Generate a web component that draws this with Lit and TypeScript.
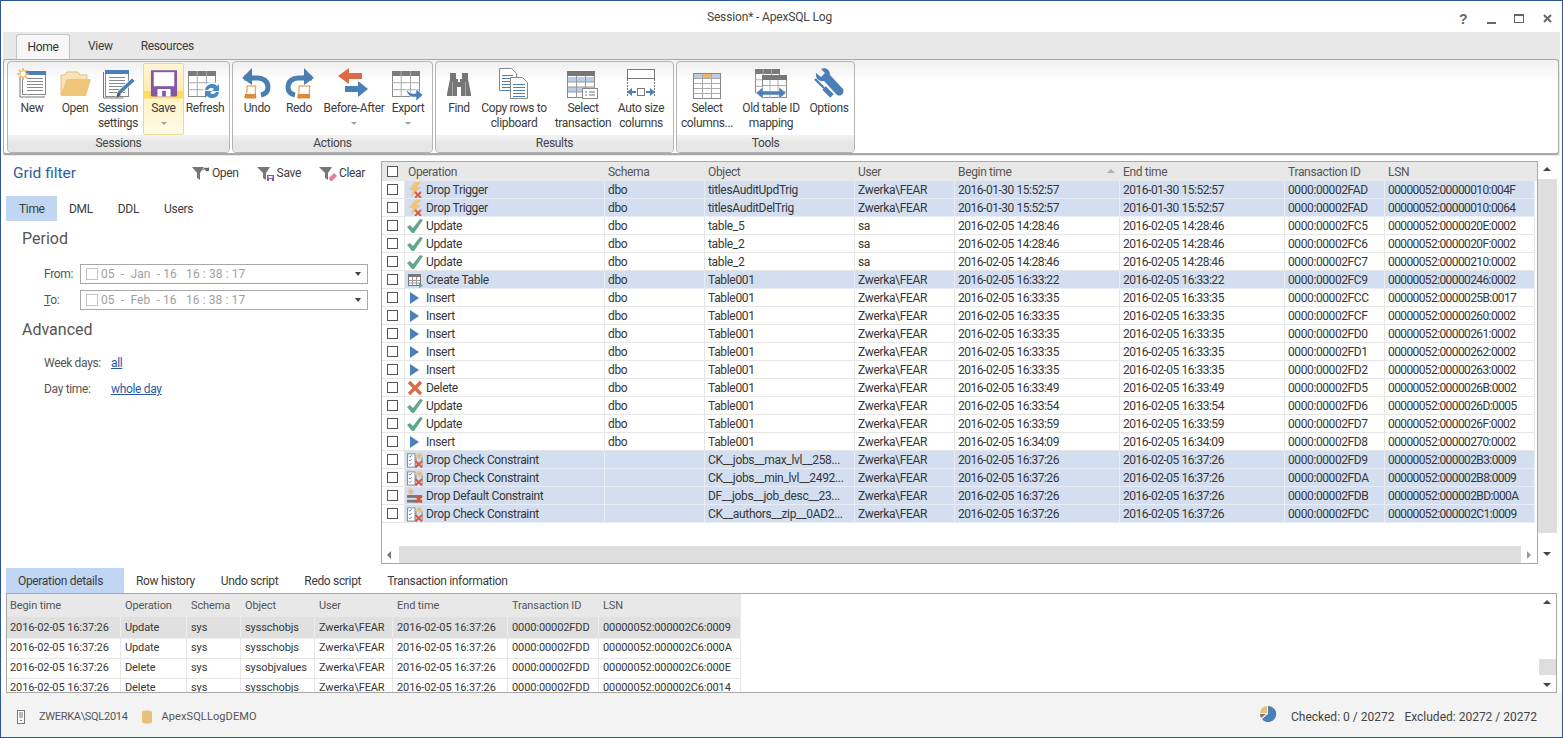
import { LitElement, html, css, svg } from "lit";
import { customElement } from "lit/decorators.js";

const lines = (x: number, y: number, w: number, n: number, step = 3, c = "#8a8a8a") =>
  Array.from({ length: n }, (_, i) => svg`<path d="M${x} ${y + i * step + 0.5}h${w}" stroke="${c}"/>`);

const table = (x: number, y: number, w: number, h: number, head = "#7a7a7a") => svg`
  <rect x="${x + .5}" y="${y + .5}" width="${w - 1}" height="${h - 1}" fill="#fff" stroke="#8a8a8a"/>
  <rect x="${x}" y="${y}" width="${w}" height="5" fill="${head}"/>
  <path d="M${x} ${y + h * .45}h${w}M${x} ${y + h * .72}h${w}M${x + w * .33} ${y}v${h}M${x + w * .66} ${y}v${h}" stroke="#aaa" fill="none"/>`;

const icons: Record<string, any> = {
  new: svg`<svg viewBox="0 -2 32 32" width="32" height="32"><path d="M4 9v20h25" fill="none" stroke="#777"/><rect x="6.5" y="3.5" width="23" height="23" fill="#fff" stroke="#888"/><rect x="6" y="3" width="24" height="4" fill="#4a7fb8"/>${lines(11, 10, 16, 5, 3)}<g stroke="#eab35c" stroke-width="1.6"><path d="M7 0v12M1 6h12M3 2l8 8M11 2l-8 8"/></g><circle cx="7" cy="6" r="3.2" fill="#fff" stroke="#eab35c"/></svg>`,
  open: svg`<svg viewBox="0 -1 32 32" width="32" height="32"><path d="M2 28V8h4l2-3h11l2 3h7v5H8z" fill="#f8e3b8" stroke="#e5c078"/><path d="M8 12h24l-5 17H2z" fill="#eec67a"/></svg>`,
  settings: svg`<svg viewBox="0 -2 32 32" width="32" height="32"><path d="M1.5 4v26h20" fill="none" stroke="#777"/><rect x="3.5" y="2.5" width="23" height="26" fill="#fff" stroke="#888"/><rect x="3" y="2" width="24" height="4" fill="#4a7fb8"/>${lines(7, 9, 16, 6, 3)}<path d="M14 29l2-6 14-13 3 3-14 13z" fill="#4a7fb8" stroke="#fff" stroke-width=".8"/><path d="M14 30l2-6 3 3z" fill="#555"/></svg>`,
  save: svg`<svg viewBox="0 -1.5 30 30" width="28" height="28"><path d="M1 1h28v27l-1 1H2l-1-1z" fill="#8557a8"/><rect x="4" y="3" width="22" height="15" fill="#fff"/><rect x="8" y="21" width="14" height="8" fill="#fff"/><rect x="13" y="23" width="4" height="6" fill="#8557a8"/></svg>`,
  refresh: svg`<svg viewBox="0 -3 34 32" width="34" height="32">${table(0, 2, 28, 26)}<circle cx="24" cy="22" r="9" fill="#fff"/><path d="M17 21a7 7 0 0 1 12-4l2-2v7h-7l2-2a4 4 0 0 0-6 1zM31 23a7 7 0 0 1-12 4l-2 2v-7h7l-2 2a4 4 0 0 0 6-1z" fill="#4a8ac4"/></svg>`,
  undo: svg`<svg viewBox="0 -2 32 32" width="32" height="32"><path d="M3 10h13a10 9 0 0 1 11 9c0 4-2 7-7 8" fill="none" stroke="#4a7fb0" stroke-width="5"/><path d="M11 0L1 10l10 7V12l2-2-2-3z" fill="#4a7fb0"/><path d="M6 18h9c-1 3-1 8 0 12H4c-1-3 2-4 2-6z" fill="#fff" stroke="#e08a3c"/><path d="M4 26h11v4H4z" fill="#e08a3c"/></svg>`,
  redo: svg`<svg viewBox="0 -2 32 32" width="32" height="32"><path d="M29 10H16a10 9 0 0 0-11 9c0 4 2 7 7 8" fill="none" stroke="#4a7fb0" stroke-width="5"/><path d="M21 0l10 10-10 7V12l-2-2 2-3z" fill="#4a7fb0"/><path d="M16 18h11c-1 3-1 8 0 12H15c-1-3 1-4 1-6z" fill="#fff" stroke="#e08a3c"/><path d="M15 26h12v4H15z" fill="#e08a3c"/></svg>`,
  before: svg`<svg viewBox="0 0 32 32" width="32" height="32"><path d="M11 2L0 10l11 8v-5h13V7H11z" fill="#dc6a45"/><path d="M20 15l10 8-10 8v-5H7v-6h13z" fill="#4a7fb8"/></svg>`,
  export: svg`<svg viewBox="0 -3 32 32" width="32" height="32">${table(0, 2, 28, 26)}<path d="M14 20c4 5 7 5 10 4v-4l7 6-7 6v-4c-5 1-9-2-10-8z" fill="#4a7fb8" stroke="#fff" stroke-width=".6"/></svg>`,
  find: svg`<svg viewBox="0 -4 26 26" width="26" height="26"><path d="M4 0h6v6h2v3h2V6h2V0h6v6l3 15v2H15v-9h-4v9H1v-2L1 21l3-15z" fill="#767676"/><path d="M6.500 9v14M19.500 9v14" stroke="#aaa"/></svg>`,
  copy: svg`<svg viewBox="0 -2 30 32" width="30" height="32"><path d="M.5 .5h12l5 5v17H.5z" fill="#fff" stroke="#888"/>${lines(3, 7, 11, 6, 3, "#4a7fb8")}<path d="M11.500 9.500h12l5 5v16h-17z" fill="#fff" stroke="#888"/>${lines(14, 16, 12, 5, 3, "#4a7fb8")}</svg>`,
  select: svg`<svg viewBox="0 -4 32 30" width="32" height="30"><rect x=".5" y=".5" width="27" height="26" fill="#fff" stroke="#888"/><rect width="28" height="5" fill="#777"/><rect x="1" y="6" width="26" height="5" fill="#b9cde6"/><rect x="1" y="16" width="26" height="5" fill="#b9cde6"/><path d="M9.500 5v22M18.500 5v22M0 11h28M0 16h28M0 21h28" stroke="#999"/><rect x="15.500" y="17.500" width="15" height="10" fill="#fff" stroke="#888"/><path d="M18 21h2M18 24h2M22 21h6M22 24h6" stroke="#777"/></svg>`,
  auto: svg`<svg viewBox="0 -2 30 30" width="30" height="30"><rect x="1.500" y=".5" width="27" height="9" fill="#fff" stroke="#777"/><path d="M1.500 10v18M28.500 10v18" stroke="#777" stroke-dasharray="2 1"/><rect x="11.500" y="19.500" width="7" height="7" fill="#fff" stroke="#777"/><path d="M1 23l5-4v3h4v2H6v3zM29 23l-5-4v3h-4v2h4v3z" fill="#4a7fb8"/></svg>`,
  columns: svg`<svg viewBox="0 -4 28 26" width="28" height="26"><rect x=".5" y=".5" width="27" height="25" fill="#fff" stroke="#888"/><rect x="1" y="1" width="8" height="4" fill="#b9cde6"/><rect x="10" y="1" width="8" height="4" fill="#e8b96c"/><rect x="19" y="1" width="8" height="4" fill="#b9cde6"/><path d="M9.500 1v24M18.500 1v24M1 5.500h26M1 10.500h26M1 15.500h26M1 20.500h26" stroke="#aaa"/></svg>`,
  oldid: svg`<svg viewBox="0 -2 32 32" width="32" height="32">${table(0, 1, 25, 24)}<rect x="7.500" y="7.500" width="24" height="22" fill="#fff" stroke="#888"/><rect x="7" y="7" width="25" height="5" fill="#777"/><path d="M15 12v18M23 12v18M8 17.500h24M8 23.500h24" stroke="#aaa"/><path d="M1 25l7-6v4h16v-4l7 6-7 6v-4H8v4z" fill="#4a7fb8" stroke="#fff" stroke-width=".5"/></svg>`,
  options: svg`<svg viewBox="0 -2 32 32" width="32" height="32"><path d="M8 1c4-2 9 0 9 6l13 14c2 4-2 8-6 6L11 13C6 14 2 10 3 5l5 4 4-4z" fill="#4a7fb8"/><path d="M2 11l9 9" stroke="#4a7fb8" stroke-width="2.400"/><path d="M11 20l8 8" stroke="#4a7fb8" stroke-width="5"/></svg>`,
  fOpen: svg`<svg viewBox="0 0 18 15" width="18" height="15"><path d="M0 1h12L8 7v7l-3-2V7z" fill="#777"/><path d="M10 5c1-3 3-4 6-3l1-1v4h-4l1-1c-2-1-3 0-4 1z" fill="#666"/></svg>`,
  fSave: svg`<svg viewBox="0 0 18 15" width="18" height="15"><path d="M0 1h13L9 7v7l-3-2V7z" fill="#777"/><rect x="10" y="9" width="7" height="6" fill="#8557a8"/><rect x="11.500" y="10" width="4" height="2" fill="#fff"/><rect x="12" y="13" width="3" height="2" fill="#fff"/></svg>`,
  fClear: svg`<svg viewBox="0 0 18 15" width="18" height="15"><path d="M0 1h13L9 7v7l-3-2V7z" fill="#777"/><path d="M10 12l5-5 3 3-5 5h-2z" fill="#ec7b95"/></svg>`,
};

const opIcons: Record<string, any> = {
  trig: svg`<svg viewBox="0 0 16 16" width="16" height="16"><path d="M8 0h6l-4 5h4L4 15l2-7H2z" fill="#f2c27a"/><path d="M8 10l6 6M14 10l-6 6" stroke="#d9573a" stroke-width="1.800"/></svg>`,
  upd: svg`<svg viewBox="0 0 16 16" width="16" height="16"><path d="M0 9l3-2 3 3 7-9 3 1-9 13H5z" fill="#63a68d"/></svg>`,
  tbl: svg`<svg viewBox="0 0 16 16" width="16" height="16"><rect x="1.500" y="2.500" width="12" height="11" fill="#fff" stroke="#777"/><rect x="1" y="2" width="13" height="3" fill="#777"/><path d="M5.500 5v8M9.500 5v8M2 8.500h11M2 11h11" stroke="#999"/><path d="M12 11l4 2.500-4 2.500z" fill="#63a68d"/></svg>`,
  ins: svg`<svg viewBox="0 0 16 16" width="16" height="16"><path d="M3 2l9 6-9 6z" fill="#4a7fb8"/></svg>`,
  del: svg`<svg viewBox="0 0 16 16" width="16" height="16"><path d="M2 2l12 12M14 2L2 14" stroke="#dc6a45" stroke-width="3.400"/></svg>`,
  chk: svg`<svg viewBox="0 0 17 16" width="16" height="16"><rect x=".5" y="1.500" width="8" height="14" fill="#fff" stroke="#888"/><path d="M2 4l1 1 2-2M2 8l1 1 2-2M2 12l1 1 2-2" stroke="#4a7fb8" fill="none"/><path d="M9.500 5v10M16 5v10" stroke="#888"/><path d="M13 0v7M9.500 3.500h7M10.500 1l5 5M15.500 1l-5 5" stroke="#eab35c"/><path d="M9 9l7 7M16 9l-7 7" stroke="#d9573a" stroke-width="2"/></svg>`,
  dflt: svg`<svg viewBox="0 0 17 16" width="16" height="16"><path d="M4 0v7M.5 3.500h7M1.500 1l5 5M6.500 1l-5 5" stroke="#eab35c"/><rect x="0" y="7" width="16" height="3" fill="#777"/><rect x="0" y="12" width="16" height="3" fill="#777"/><path d="M9 8l7 7M16 8l-7 7" stroke="#d9573a" stroke-width="2"/></svg>`,
};

type Row = [string, string, string, string, string, string, string, string, string, boolean];
const S = "2016-02-05 ";
const rows: Row[] = [
  ["trig", "Drop Trigger", "dbo", "titlesAuditUpdTrig", "Zwerka\\FEAR", "2016-01-30 15:52:57", "2016-01-30 15:52:57", "0000:00002FAD", "00000052:00000010:004F", true],
  ["trig", "Drop Trigger", "dbo", "titlesAuditDelTrig", "Zwerka\\FEAR", "2016-01-30 15:52:57", "2016-01-30 15:52:57", "0000:00002FAD", "00000052:00000010:0064", true],
  ["upd", "Update", "dbo", "table_5", "sa", S + "14:28:46", S + "14:28:46", "0000:00002FC5", "00000052:0000020E:0002", false],
  ["upd", "Update", "dbo", "table_2", "sa", S + "14:28:46", S + "14:28:46", "0000:00002FC6", "00000052:0000020F:0002", false],
  ["upd", "Update", "dbo", "table_2", "sa", S + "14:28:46", S + "14:28:46", "0000:00002FC7", "00000052:00000210:0002", false],
  ["tbl", "Create Table", "dbo", "Table001", "Zwerka\\FEAR", S + "16:33:22", S + "16:33:22", "0000:00002FC9", "00000052:00000246:0002", true],
  ["ins", "Insert", "dbo", "Table001", "Zwerka\\FEAR", S + "16:33:35", S + "16:33:35", "0000:00002FCC", "00000052:0000025B:0017", false],
  ["ins", "Insert", "dbo", "Table001", "Zwerka\\FEAR", S + "16:33:35", S + "16:33:35", "0000:00002FCF", "00000052:00000260:0002", false],
  ["ins", "Insert", "dbo", "Table001", "Zwerka\\FEAR", S + "16:33:35", S + "16:33:35", "0000:00002FD0", "00000052:00000261:0002", false],
  ["ins", "Insert", "dbo", "Table001", "Zwerka\\FEAR", S + "16:33:35", S + "16:33:35", "0000:00002FD1", "00000052:00000262:0002", false],
  ["ins", "Insert", "dbo", "Table001", "Zwerka\\FEAR", S + "16:33:35", S + "16:33:35", "0000:00002FD2", "00000052:00000263:0002", false],
  ["del", "Delete", "dbo", "Table001", "Zwerka\\FEAR", S + "16:33:49", S + "16:33:49", "0000:00002FD5", "00000052:0000026B:0002", false],
  ["upd", "Update", "dbo", "Table001", "Zwerka\\FEAR", S + "16:33:54", S + "16:33:54", "0000:00002FD6", "00000052:0000026D:0005", false],
  ["upd", "Update", "dbo", "Table001", "Zwerka\\FEAR", S + "16:33:59", S + "16:33:59", "0000:00002FD7", "00000052:0000026F:0002", false],
  ["ins", "Insert", "dbo", "Table001", "Zwerka\\FEAR", S + "16:34:09", S + "16:34:09", "0000:00002FD8", "00000052:00000270:0002", false],
  ["chk", "Drop Check Constraint", "", "CK__jobs__max_lvl__258...", "Zwerka\\FEAR", S + "16:37:26", S + "16:37:26", "0000:00002FD9", "00000052:000002B3:0009", true],
  ["chk", "Drop Check Constraint", "", "CK__jobs__min_lvl__2492...", "Zwerka\\FEAR", S + "16:37:26", S + "16:37:26", "0000:00002FDA", "00000052:000002B8:0009", true],
  ["dflt", "Drop Default Constraint", "", "DF__jobs__job_desc__23...", "Zwerka\\FEAR", S + "16:37:26", S + "16:37:26", "0000:00002FDB", "00000052:000002BD:000A", true],
  ["chk", "Drop Check Constraint", "", "CK__authors__zip__0AD2...", "Zwerka\\FEAR", S + "16:37:26", S + "16:37:26", "0000:00002FDC", "00000052:000002C1:0009", true],
];

const details = [
  ["Update", "sys", "sysschobjs", "00000052:000002C6:0009"],
  ["Update", "sys", "sysschobjs", "00000052:000002C6:000A"],
  ["Delete", "sys", "sysobjvalues", "00000052:000002C6:000E"],
  ["Delete", "sys", "sysschobjs", "00000052:000002C6:0014"],
];

const groups = [
  { label: "Sessions", w: 223, pad: 4, items: [
    ["new", ["New"], 40, false], ["open", ["Open"], 46, false], ["settings", ["Session", "settings"], 40, false], ["save", ["Save"], 41, true, 5], ["refresh", ["Refresh"], 42, false]] },
  { label: "Actions", w: 201, pad: 3, items: [
    ["undo", ["Undo"], 42, false], ["redo", ["Redo"], 42, false], ["before", ["Before-After"], 68, true], ["export", ["Export"], 40, true]] },
  { label: "Results", w: 239, pad: 5, items: [
    ["find", ["Find"], 36, false], ["copy", ["Copy rows to", "clipboard"], 74, false], ["select", ["Select", "transaction"], 64, false], ["auto", ["Auto size", "columns"], 52, false]] },
  { label: "Tools", w: 179, pad: 4, items: [
    ["columns", ["Select", "columns..."], 52, false], ["oldid", ["Old table ID", "mapping"], 76, false], ["options", ["Options"], 40, false]] },
] as const;

@customElement("app-root")
export class AppRoot extends LitElement {
  static styles = css`
    :host { display: block; width: 1563px; height: 738px; box-sizing: border-box; border: 1px solid #2b579a; background: #fff;
      font: 12px/16px Roboto, "Open Sans", sans-serif; letter-spacing: -.33px; color: #3c3c3c; overflow: hidden; }
    svg { overflow: visible; flex: none; }
    .win { display: flex; flex-direction: column; height: 736px; }
    .title { height: 31px; flex: none; display: flex; align-items: center; justify-content: center; position: relative; padding-right: 24px; box-sizing: border-box; }
    .title span { color: #444; margin-top: 1px; letter-spacing: -.15px; }
    .ctrl { position: absolute; right: 0; top: 0; }
    .tabs { flex: none; height: 27px; margin: 0 2px; background: #e8e8e8; display: flex; padding: 2px 0 0 13px; box-sizing: border-box; }
    .tab { height: 25px; padding: 0 11px 1px; display: flex; align-items: center; box-sizing: border-box; margin-right: 6px; }
    .tab.on { background: #f7f7f7; border: 1px solid #c4c4c4; border-bottom: none; border-radius: 3px 3px 0 0; margin-right: 7px; width: 54px; justify-content: center; padding: 0 0 1px; height: 26px; color: #333; }
    .ribbon { flex: none; height: 97px; margin: 0 2px; background: #e8e8e8; }
    .rbox { height: 96px; margin: 0 1px 0 0; box-sizing: border-box; border: 1px solid #a8a8a8; border-radius: 3px; border-bottom-width: 2px;
      background: linear-gradient(#f1f1f1, #fff 22px); display: flex; gap: 2px; padding: 1px 0 0 3px; }
    .grp { height: 92px; box-sizing: border-box; border: 1px solid #b4b4b4; border-radius: 4px; display: flex; flex-direction: column;
      background: linear-gradient(#efefef, #fff 20px); overflow: hidden; }
    .items { flex: 1; display: flex; align-items: flex-start; padding-top: 1px; }
    .glabel { height: 17px; background: linear-gradient(#f3f3f3,#e6e6e6 50%); text-align: center; line-height: 17px; color: #444; }
    .btn { height: 72px; box-sizing: border-box; display: flex; flex-direction: column; align-items: center; text-align: center; line-height: 15px; color: #3c3c3c; padding-top: 1px; white-space: nowrap; border: 1px solid transparent; flex: none; }
    .btn .ic { height: 34px; width: 32px; display: flex; align-items: center; justify-content: center; margin-bottom: 2px; }
    .btn .caret { width: 0; height: 0; border: 3px solid transparent; border-top: 3px solid #a0a0a0; border-bottom: 0; margin-top: 6px; }
    .btn.save { background: linear-gradient(#fff6d5, #ffeeb0 38%, #ffdb5e 39%, #ffdb5e 49%, #fff3c6 49.5%, #fffbe8); border-color: #ecd98e; border-radius: 2px; }
    .main { flex: none; height: 407px; display: flex; margin-top: 5px; }
    .side { width: 380px; flex: none; box-sizing: border-box; padding: 0 0 0 5px; display: flex; flex-direction: column; margin-top: -3px; }
    .gf { display: flex; align-items: center; height: 24px; padding: 1px 0 0 7px; margin-top: 2px; }
    .gf h2 { font-size: 15.500px; font-weight: 400; letter-spacing: 0; color: #2f5f9a; margin: 0; flex: 1; }
    .gf a { display: flex; align-items: center; gap: 2px; margin-right: 18px; color: #3c3c3c; }
    .gf a:last-child { margin-right: 16px; }
    .ftabs { display: flex; margin-top: 11px; height: 25px; }
    .ftabs div { display: flex; align-items: center; height: 25px; padding: 0 12px; margin-right: 1px; color: #3c3c3c; }
    .ftabs .on, .dtabs .on { background: #c1d6f2; }
    .ftabs .on { padding: 0 13px; margin-right: 0; width: 51px; box-sizing: border-box; }
    .h3 { font-size: 16px; letter-spacing: 0; color: #555; margin: 7px 0 0 16px; height: 22px; line-height: 22px; }
    .frow { display: flex; align-items: center; height: 20px; margin: 6px 13px 0 38px; }
    .frow.first { margin-top: 14px; }
    .frow label { width: 36px; color: #555; }
    .date { flex: 1; height: 20px; box-sizing: border-box; border: 1px solid #a8a8a8; display: flex; align-items: center; padding: 0 6px 0 5px; color: #a0a0a0; letter-spacing: .1px; white-space: pre; }
    .date i { width: 10px; height: 10px; border: 1px solid #c4c4c4; margin-right: 3px; }
    .date b { margin-left: auto; width: 0; height: 0; border: 3px solid transparent; border-top: 4px solid #444; border-bottom: 0; }
    .h3.adv { margin-top: 9px; margin-bottom: 9px; }
    .arow { display: flex; height: 26px; align-items: center; margin-left: 38px; color: #555; }
    .arow span { width: 67px; }
    .arow a { color: #2a5aa0; text-decoration: underline; }
    .gridwrap { flex: 1; display: flex; min-width: 0; align-items: flex-start; }
    .grid { width: 1157px; height: 403px; flex: none; box-sizing: border-box; border: 1px solid #a8a8a8; position: relative; overflow: hidden; }
    .ghead, .grow { display: grid; grid-template-columns: 23px 200px 100px 150px 100px 165px 165px 100px 1fr; margin-right: 2px; }
    .ghead { height: 19px; background: #e8e8e8; color: #555; align-items: center; margin-right: 0; }
    .ghead > div { padding-left: 3px; white-space: nowrap; }
    .grow { height: 18px; }
    .grow > div { border: solid #e6e6e6; border-width: 0 1px 1px 0; display: flex; align-items: center; padding-left: 3px; white-space: nowrap; overflow: hidden; color: #363636; box-sizing: border-box; }
    .grow.blue > div:not(:first-child) { background: #d3dff0; border-color: #e9eef6; }
    .grow > div.op { padding-left: 2px; gap: 3px; }
    .grow > div.ls5, .grow > div.ls6 { letter-spacing: -.47px; }
    .grow > div.ls7 { letter-spacing: -.4px; }
    .grow > div.ls8 { letter-spacing: -.6px; }
    .grow > div:first-child { padding: 0 0 0 5px; background: #fff; }
    .ghead > div:first-child { padding: 0 0 0 5px; display: flex; }
    .cb { width: 9px; height: 9px; border: 1px solid #555; background: #fff; display: block; flex: none; }
    .sort { position: absolute; left: 725px; top: 7px; width: 0; height: 0; border: 4px solid transparent; border-bottom: 4px solid #b0b0b0; border-top: 0; }
    .hbar { position: absolute; left: 0; right: 0; bottom: 0; height: 17px; }
    .hbar .tr { position: absolute; left: 17px; right: 16px; top: 0; bottom: 0; background: #dedede; }
    .vbar { width: 19px; height: 403px; flex: none; position: relative; }
    .vbar .tr { position: absolute; left: 0; right: 0; top: 18px; bottom: 31px; background: #dedede; }
    .up { position: absolute; width: 0; height: 0; border: 4px solid transparent; border-top: 0; border-bottom: 4px solid #444; }
    .dn { position: absolute; width: 0; height: 0; border: 4px solid transparent; border-bottom: 0; border-top: 4px solid #444; }
    .lt { position: absolute; left: 5px; top: 5px; width: 0; height: 0; border: 4px solid transparent; border-left: 0; border-right: 4px solid #777; }
    .rt { position: absolute; right: 6px; top: 5px; width: 0; height: 0; border: 4px solid transparent; border-right: 0; border-left: 4px solid #999; }
    .vbar .up { left: 5px; top: 6px; }
    .vbar .dn { left: 5px; bottom: 8px; }
    .bottom { flex: none; display: flex; flex-direction: column; margin: 0 2px; }
    .dtabs { display: flex; height: 25px; margin-left: 3px; color: #3c3c3c; }
    .dtabs div { display: flex; align-items: center; padding: 0 13px; }
    .dtabs .on { width: 118px; box-sizing: border-box; padding: 0 12px; margin-right: -1px; }
    .dpanel { margin: 0 3px; height: 100px; box-sizing: border-box; border: 1px solid #a8a8a8; position: relative; overflow: hidden; font-size: 11px; letter-spacing: -.1px; }
    .dt { width: 734px; }
    .dhead, .drow { display: grid; grid-template-columns: 114px 66px 54px 74px 78px 115px 91px 1fr; }
    .dhead { height: 23px; background: #e8e8e8; color: #555; }
    .dhead > div { padding-left: 4px; line-height: 24px; }
    .dhead > div:first-child, .drow > div:first-child { padding-left: 3px; }
    .drow { height: 20px; }
    .drow > div { border: solid #e6e6e6; border-width: 0 1px 1px 0; padding-left: 4px; line-height: 21px; white-space: nowrap; color: #363636; box-sizing: border-box; }
    .drow.sel > div { background: #e0e0e0; border-color: #eee; }
    .dpanel .up { right: 5px; top: 6px; }
    .dpanel .dn { right: 5px; bottom: 5px; }
    .thumb { position: absolute; right: 0; top: 65px; width: 17px; height: 16px; background: #dedede; }
    .status { flex: none; height: 44px; background: #f3f3f3; display: flex; align-items: center; padding: 4px 0 0 16px; box-sizing: border-box; color: #555; font-size: 11px; letter-spacing: -.3px; }
    .status .s { display: flex; align-items: center; }
    .status .db { margin-left: 14px; letter-spacing: .1px; }
    .srv { margin-right: 14px; }
    .cyl { margin-right: 10px; }
    .status .r { margin-left: auto; display: flex; align-items: center; margin-right: 25px; color: #444; font-size: 12px; letter-spacing: 0; }
    .pie { margin-right: 15px; margin-top: -7px; }
    .excl { margin-left: 10px; }
  `;

  private headers = ["Operation", "Schema", "Object", "User", "Begin time", "End time", "Transaction ID", "LSN"];

  render() {
    return html`<div class="win">
      <div class="title"><span>Session* - ApexSQL Log</span>
        <svg class="ctrl" width="120" height="31" viewBox="0 0 120 31">
          <text x="17" y="23" font-family="Liberation Sans" font-weight="700" font-size="14" fill="#666">?</text>
          <rect x="45" y="21" width="9" height="2" fill="#666"/>
          <rect x="72.500" y="13.500" width="9" height="8" fill="none" stroke="#666"/><rect x="72" y="13" width="10" height="2" fill="#666"/>
          <path d="M102 14l7 7M109 14l-7 7" stroke="#666" stroke-width="2"/>
        </svg>
      </div>
      <div class="tabs"><div class="tab on">Home</div><div class="tab">View</div><div class="tab">Resources</div></div>
      <div class="ribbon"><div class="rbox">
        ${groups.map((g) => html`<div class="grp" style="width:${g.w}px">
          <div class="items" style="padding-left:${g.pad}px">${g.items.map((b: any) => html`<div class="btn ${b[0] === "save" ? "save" : ""}" style="width:${b[2]}px;margin-left:${b[4] ?? 0}px">
            <div class="ic">${icons[b[0] as string]}</div>
            ${(b[1] as readonly string[]).map((t) => html`<div>${t}</div>`)}
            ${b[3] ? html`<div class="caret"></div>` : ""}
          </div>`)}</div>
          <div class="glabel">${g.label}</div>
        </div>`)}
      </div></div>
      <div class="main">
        <div class="side">
          <div class="gf"><h2>Grid filter</h2>
            <a>${icons.fOpen}Open</a><a>${icons.fSave}Save</a><a>${icons.fClear}Clear</a></div>
          <div class="ftabs"><div class="on">Time</div><div>DML</div><div>DDL</div><div>Users</div></div>
          <div class="h3">Period</div>
          <div class="frow first"><label>From:</label><div class="date"><i></i>05  -  Jan  - 16   16 : 38 : 17<b></b></div></div>
          <div class="frow"><label><u>T</u>o:</label><div class="date"><i></i>05  -  Feb  - 16   16 : 38 : 17<b></b></div></div>
          <div class="h3 adv">Advanced</div>
          <div class="arow"><span>Week days:</span><a>all</a></div>
          <div class="arow"><span>Day time:</span><a>whole day</a></div>
        </div>
        <div class="gridwrap">
          <div class="grid">
            <div class="ghead"><div><i class="cb"></i></div>${this.headers.map((h) => html`<div>${h}</div>`)}</div>
            ${rows.map((r) => html`<div class="grow ${r[9] ? "blue" : ""}">
              <div><i class="cb"></i></div>
              <div class="op">${opIcons[r[0]]}<span>${r[1]}</span></div>
              ${[2, 3, 4, 5, 6, 7, 8].map((i) => html`<div class="ls${i}">${r[i]}</div>`)}
            </div>`)}
            <i class="sort"></i>
            <div class="hbar"><i class="lt"></i><div class="tr"></div><i class="rt"></i></div>
          </div>
          <div class="vbar"><i class="up"></i><div class="tr"></div><i class="dn"></i></div>
        </div>
      </div>
      <div class="bottom">
        <div class="dtabs"><div class="on">Operation details</div><div>Row history</div><div>Undo script</div><div>Redo script</div><div>Transaction information</div></div>
        <div class="dpanel"><div class="dt">
          <div class="dhead">${["Begin time", "Operation", "Schema", "Object", "User", "End time", "Transaction ID", "LSN"].map((h) => html`<div>${h}</div>`)}</div>
          ${details.map((d, i) => html`<div class="drow ${i === 0 ? "sel" : ""}">
            <div>2016-02-05 16:37:26</div><div>${d[0]}</div><div>${d[1]}</div><div>${d[2]}</div><div>Zwerka\\FEAR</div><div>2016-02-05 16:37:26</div><div>0000:00002FDD</div><div>${d[3]}</div>
          </div>`)}
        </div>
        <i class="up"></i>
        <div class="thumb"></div>
        <i class="dn"></i>
        </div>
      </div>
      <div class="status">
        <div class="s"><svg class="srv" width="8" height="14" viewBox="0 0 8 14"><rect x=".5" y=".5" width="7" height="13" fill="#fff" stroke="#777"/><path d="M2 3h4M2 5h4M2 7h4" stroke="#777"/><rect x="3" y="10" width="2" height="1" fill="#777"/></svg>ZWERKA\\SQL2014</div>
        <div class="s db"><svg class="cyl" width="10" height="14" viewBox="0 0 10 14"><path d="M0 2c0-2 10-2 10 0v10c0 2-10 2-10 0z" fill="#e9bf7c"/></svg>ApexSQLLogDEMO</div>
        <div class="r"><svg class="pie" width="16" height="16" viewBox="0 0 16 16"><path d="M8 0a8 8 0 1 1-6 13l6-5z" fill="#4a7fb8"/><path d="M7 0v7H0a7 7 0 0 1 7-7z" fill="#e8bf80"/><path d="M0 8h6l-5 4a8 8 0 0 1-1-4z" fill="#777"/></svg>Checked: 0 / 20272<span class="excl">Excluded: 20272 / 20272</span></div>
      </div>
    </div>`;
  }
}
